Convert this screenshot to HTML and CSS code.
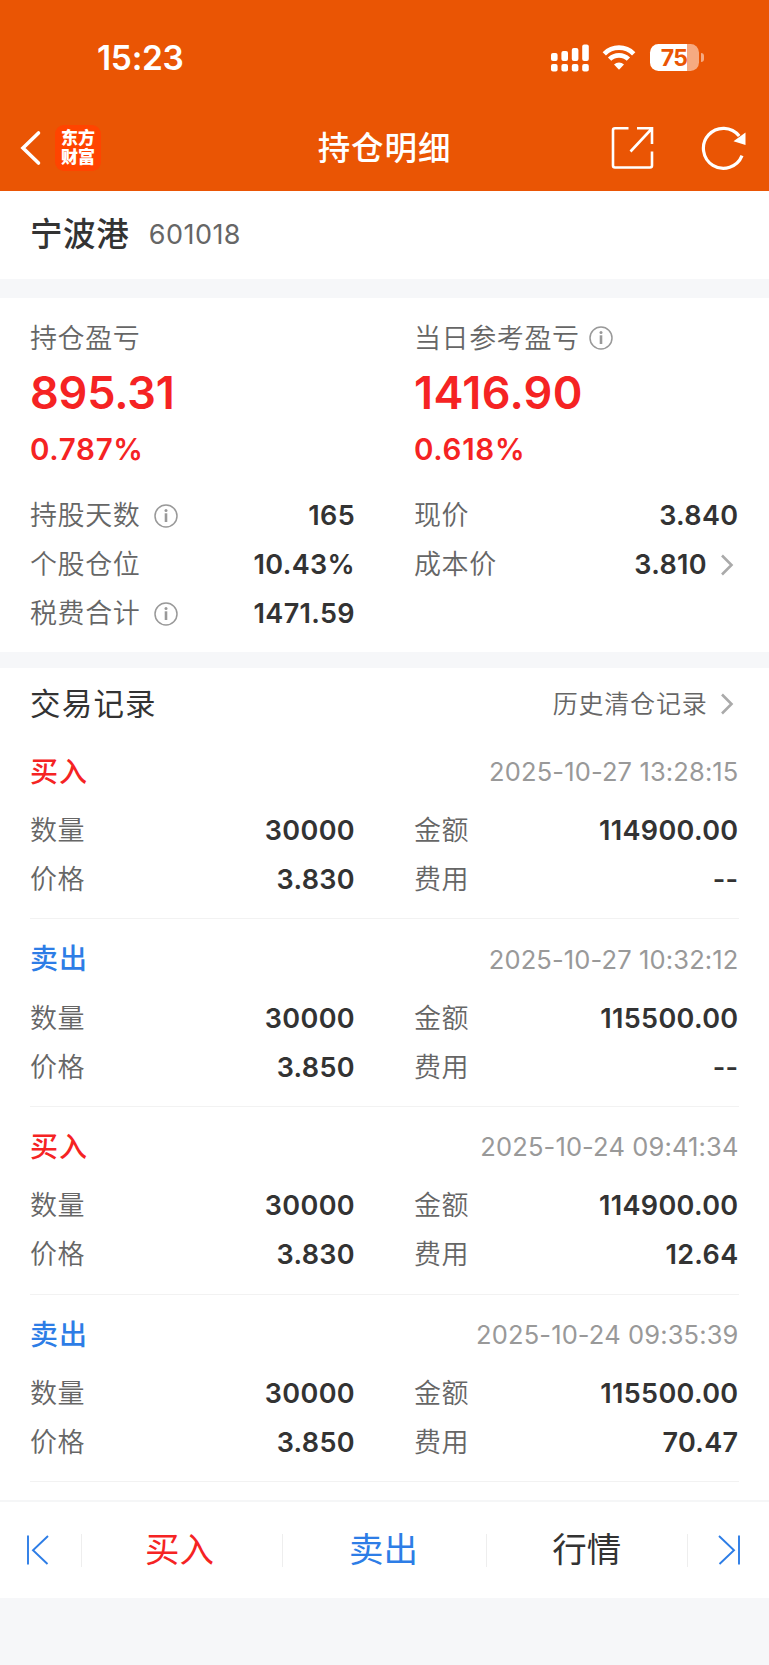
FILE: index.html
```html
<!DOCTYPE html>
<html lang="zh-CN">
<head>
<meta charset="utf-8">
<title>持仓明细</title>
<link rel="stylesheet" href="styles.css">
</head>
<body>
<header class="header">
  <div class="status">
    <span class="clock">15:23</span>
    <svg class="signal" width="38" height="28" viewBox="0 0 38 28" fill="#fff">
      <rect x="0" y="9" width="6.6" height="8" rx="2"/><rect x="10.4" y="7" width="6.6" height="10" rx="2"/><rect x="20.8" y="4" width="6.6" height="13" rx="2"/><rect x="31.2" y="0.500" width="6.6" height="16.500" rx="2"/>
      <rect x="0" y="20" width="6.600" height="7.500" rx="2"/><rect x="10.400" y="20" width="6.600" height="7.500" rx="2"/><rect x="20.800" y="20" width="6.600" height="7.500" rx="2"/><rect x="31.200" y="20" width="6.600" height="7.500" rx="2"/>
    </svg>
    <svg class="wifi" width="34" height="26" viewBox="0 0 34 26">
      <path d="M2.300 8.800a20.800 20.800 0 0 1 29.400 0M7.600 14.200a13.300 13.300 0 0 1 18.800 0" fill="none" stroke="#fff" stroke-width="4.700"/>
      <path d="M12 19.600a7.200 7.200 0 0 1 10 0L17 24.800z" fill="#fff"/>
    </svg>
    <span class="battery"><span class="battery-level">75</span></span>
    <span class="battery-tip"></span>
  </div>
  <nav class="nav">
    <svg class="back" width="22" height="36" viewBox="0 0 22 36"><path d="M18.500 3L3 18l15.500 15" fill="none" stroke="#fff" stroke-width="3.600" stroke-linecap="round"/></svg>
    <span class="logo"><span>东方</span><span>财富</span></span>
    <h1 class="title">持仓明细</h1>
    <svg class="share" width="44" height="44" viewBox="0 0 44 44" fill="none" stroke="#fff" stroke-width="2.600"><path d="M17.500 2.300H4A2 2 0 0 0 2 4.300V39.500a2 2 0 0 0 2 2H39a2 2 0 0 0 2-2V25.500M26 2.300H41V18M40.500 3L19.500 25.500"/></svg>
    <svg class="refresh" width="46" height="44" viewBox="0 0 46 44"><path d="M41 29.700A20 20 0 1 1 38.200 10" fill="none" stroke="#fff" stroke-width="3.200"/><path d="M44.500 6.500V19L32.500 15.200z" fill="#fff"/></svg>
  </nav>
</header>

<section class="stock"><h2 class="stock-name">宁波港</h2><span class="stock-code">601018</span></section>

<section class="summary">
  <div class="col">
    <div class="profit-label">持仓盈亏</div>
    <div class="profit">895.31</div>
    <div class="percent">0.787%</div>
    <div class="row first"><span class="label">持股天数</span><svg class="info" width="24" height="24" viewBox="0 0 24 24"><use href="#info"/></svg><b class="value">165</b></div>
    <div class="row"><span class="label">个股仓位</span><b class="value">10.43%</b></div>
    <div class="row"><span class="label">税费合计</span><svg class="info" width="24" height="24" viewBox="0 0 24 24"><use href="#info"/></svg><b class="value">1471.59</b></div>
  </div>
  <div class="col">
    <div class="profit-label">当日参考盈亏<svg class="info near" width="24" height="24" viewBox="0 0 24 24"><g id="info"><circle cx="12" cy="12" r="11" fill="none" stroke="#999" stroke-width="1.500"/><circle cx="12" cy="6.400" r="1.500" fill="#999"/><path d="M12 9.300V18" stroke="#999" stroke-width="2.600"/></g></svg></div>
    <div class="profit wide">1416.90</div>
    <div class="percent">0.618%</div>
    <div class="row first"><span class="label">现价</span><b class="value">3.840</b></div>
    <div class="row"><span class="label">成本价</span><b class="value">3.810</b><svg class="chevron" width="14" height="22" viewBox="0 0 14 22"><path d="M2 1.500l9.500 9.500L2 20.500"/></svg></div>
  </div>
</section>

<main class="records">
  <div class="records-head"><h3 class="records-title">交易记录</h3><span class="history">历史清仓记录</span><svg class="chevron" width="14" height="22" viewBox="0 0 14 22"><path d="M2 1.500l9.500 9.500L2 20.500"/></svg></div>

  <article class="record">
    <div class="record-head"><b class="buy">买入</b><time>2025-10-27 13:28:15</time></div>
    <div class="grid">
      <div class="row"><span class="label">数量</span><b class="value">30000</b></div><div class="row"><span class="label">金额</span><b class="value">114900.00</b></div>
      <div class="row"><span class="label">价格</span><b class="value">3.830</b></div><div class="row"><span class="label">费用</span><b class="value">--</b></div>
    </div>
  </article>
  <article class="record">
    <div class="record-head"><b class="sell">卖出</b><time>2025-10-27 10:32:12</time></div>
    <div class="grid">
      <div class="row"><span class="label">数量</span><b class="value">30000</b></div><div class="row"><span class="label">金额</span><b class="value">115500.00</b></div>
      <div class="row"><span class="label">价格</span><b class="value">3.850</b></div><div class="row"><span class="label">费用</span><b class="value">--</b></div>
    </div>
  </article>
  <article class="record">
    <div class="record-head"><b class="buy">买入</b><time>2025-10-24 09:41:34</time></div>
    <div class="grid">
      <div class="row"><span class="label">数量</span><b class="value">30000</b></div><div class="row"><span class="label">金额</span><b class="value">114900.00</b></div>
      <div class="row"><span class="label">价格</span><b class="value">3.830</b></div><div class="row"><span class="label">费用</span><b class="value">12.64</b></div>
    </div>
  </article>
  <article class="record">
    <div class="record-head"><b class="sell">卖出</b><time>2025-10-24 09:35:39</time></div>
    <div class="grid">
      <div class="row"><span class="label">数量</span><b class="value">30000</b></div><div class="row"><span class="label">金额</span><b class="value">115500.00</b></div>
      <div class="row"><span class="label">价格</span><b class="value">3.850</b></div><div class="row"><span class="label">费用</span><b class="value">70.47</b></div>
    </div>
  </article>
</main>

<footer class="tabs">
  <span class="tab first-tab"><svg width="24" height="30" viewBox="0 0 24 30"><path d="M2 0.500V29.500M22 1L7 15.300L21.500 29"/></svg></span>
  <span class="tab buy-tab red">买入</span>
  <span class="tab sell-tab blue">卖出</span>
  <span class="tab">行情</span>
  <span class="tab last-tab"><svg width="24" height="30" viewBox="0 0 24 30"><path d="M22 0.500V29.500M2 1L17 15.300L2.500 29"/></svg></span>
</footer>
</body>
</html>
```
FILE: styles.css
```css
* { box-sizing: border-box; }
body { margin: 0; width: 769px; height: 1665px; overflow: hidden; background: #f6f7f9; color: #333; font-family: Inter, "Noto Sans CJK SC", sans-serif; line-height: 1; }
svg { display: block; flex: none; }
h1, h2, h3 { margin: 0; font-weight: 500; }

.header { height: 191px; background: #ea5504; color: #fff; }
.status { height: 105px; padding: 10px 65px 0 97px; display: flex; align-items: center; }
.clock { font-size: 33.500px; font-weight: 600; letter-spacing: -0.300px; margin-right: auto; padding-top: 2px; }
.wifi { margin: 0 14px 0 13.500px; }
.battery { width: 49px; height: 27px; border-radius: 8.500px; overflow: hidden; background: linear-gradient(90deg, #fff 75%, #f6aa81 75%); }
.battery-level { display: block; color: #ea5504; font-size: 23px; font-weight: 700; line-height: 28px; text-align: center; letter-spacing: -0.600px; padding-right: 1px; }
.battery-tip { width: 3px; height: 9px; margin-left: 2px; border-radius: 0 4px 4px 0; background: #f6aa81; }
.nav { height: 86px; padding: 0 22px 0 19.500px; display: grid; grid-template-columns: 22px 47px 1fr 90.500px 46px; align-items: center; }
.logo { width: 46px; height: 46px; margin-left: 13.500px; border-radius: 9px; background: #f40; display: flex; flex-direction: column; align-items: center; justify-content: center; font-size: 17px; font-weight: 800; line-height: 19px; }
.title { font-size: 32.500px; letter-spacing: 0.900px; text-align: center; margin-left: 70px; padding-top: 2px; }

.stock { height: 88px; padding: 0 30px; background: #fff; display: flex; align-items: center; }
.stock-name { font-size: 32.500px; letter-spacing: 0.600px; margin-right: 19.500px; }
.stock-code { font-size: 27px; letter-spacing: 0.450px; color: #666; padding-bottom: 1px; }

.summary { height: 354px; margin-top: 19px; padding: 15px 30px 14px; background: #fff; display: grid; grid-template-columns: 325px 324.500px; column-gap: 59px; }
.profit-label { height: 50px; display: flex; align-items: center; font-size: 27px; font-weight: 350; letter-spacing: 0.600px; color: #666; }
.profit { height: 58px; line-height: 59px; font-size: 45px; font-weight: 600; letter-spacing: -0.200px; color: #f52323; }
.profit.wide { letter-spacing: 0.350px; }
.percent { height: 56px; line-height: 56px; font-size: 29.500px; font-weight: 600; letter-spacing: 0.700px; color: #f52323; }
.row { height: 49px; display: flex; align-items: center; font-size: 27px; }
.row.first { margin-top: 14px; }
.label { color: #666; font-weight: 350; letter-spacing: 0.600px; }
.value { margin-left: auto; font-weight: 600; letter-spacing: 0.350px; }
.info { margin-left: 14px; }
.info.near { margin-left: 9px; }
.chevron { margin: 0 5px 0 12.500px; fill: none; stroke: #aaa; stroke-width: 2.600; }

.records { margin-top: 16px; height: 832px; background: #fff; padding: 0 30px; }
.records-head { height: 63.800px; padding-top: 9px; display: flex; align-items: center; }
.records-title { font-size: 30.500px; font-weight: 400; letter-spacing: 1.200px; margin-right: auto; }
.history { font-size: 25px; font-weight: 350; color: #666; letter-spacing: 0.800px; }
.record { height: 187.670px; padding-top: 9.800px; border-bottom: 1px solid #f2f2f2; }
.record-head { height: 60px; display: flex; align-items: center; justify-content: space-between; font-size: 28px; }
.record-head b { font-weight: 500; letter-spacing: 0.900px; }
.record-head time { font-size: 25.500px; letter-spacing: 0.130px; margin-right: 0.500px; color: #999; }
.grid { margin-top: 4.500px; display: grid; grid-template-columns: 325px 324.500px; column-gap: 59px; }
.buy, .red { color: #f52323; }
.sell, .blue { color: #2d7de6; }

.tabs { height: 98px; border-top: 2px solid #f5f6f7; background: #fff; display: grid; grid-template-columns: 82px 201px 204px 200.500px 1fr; align-items: center; font-size: 34.500px; }
.tab { height: 33px; display: flex; align-items: center; justify-content: center; border-right: 1px solid #eee; }
.tab svg { fill: none; stroke: #2d7de6; stroke-width: 1.900; }
.buy-tab { padding-right: 5px; }
.sell-tab { padding-right: 2px; }
.first-tab { justify-content: flex-start; padding-left: 26px; }
.last-tab { justify-content: flex-end; padding-right: 28px; border-right: 0; }
```
